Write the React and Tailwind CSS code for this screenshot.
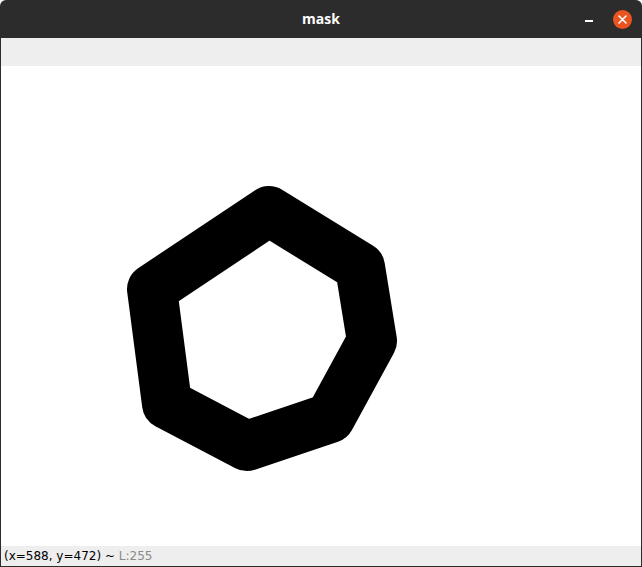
export default function App() {
  return (
    <div className="w-[642px] h-[567px] flex flex-col bg-[#2c2c2c] overflow-hidden rounded-t-[6px]">
      <div className="h-[38px] shrink-0 relative flex items-center justify-center">
        <span className="text-white font-bold text-[14px] font-['Open_Sans',sans-serif] leading-none">mask</span>
        <div className="absolute left-[585px] top-[20px] w-[8px] h-[1.5px] bg-white" />
        <div className="absolute left-[613px] top-[10px] w-[19px] h-[19px] rounded-full bg-[#e95420] flex items-center justify-center">
          <svg width="9" height="9" viewBox="0 0 9 9">
            <path d="M1 1 L8 8 M8 1 L1 8" stroke="white" strokeWidth="1.6" strokeLinecap="round" />
          </svg>
        </div>
      </div>
      <div className="flex-1 flex flex-col mx-px mb-px bg-[#eeeeee]">
        <div className="h-[28px] shrink-0 bg-[#eeeeee]" />
        <div className="h-[480px] shrink-0 bg-white">
          <svg width="640" height="480" viewBox="1 66 640 480">
            <polygon
              points="269,211 360,267 372,341 330,418 247,446 167,404 152,289"
              fill="none"
              stroke="black"
              strokeWidth="50"
              strokeLinejoin="round"
            />
          </svg>
        </div>
        <div className="flex-1 flex items-center pl-[3px] text-[12px] font-['DejaVu_Sans',sans-serif] leading-none">
          <span className="text-black">(x=588, y=472) ~&nbsp;</span>
          <span className="text-[#8a8a8a]">L:255</span>
        </div>
      </div>
    </div>
  );
}
